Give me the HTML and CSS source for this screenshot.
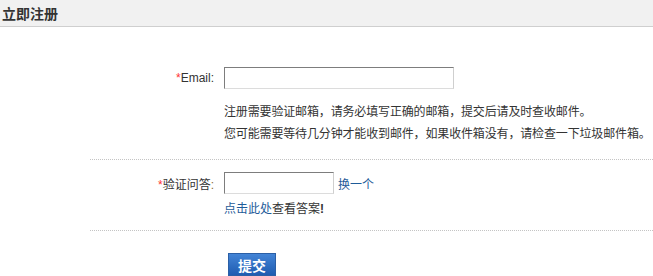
FILE: index.html
```html
<!DOCTYPE html>
<html lang="zh">
<head>
<meta charset="utf-8">
<link rel="stylesheet" href="styles.css">
</head>
<body>
<div class="header"><h2 class="title">立即注册</h2></div>
<form class="form">
  <div class="row row-email">
    <div class="line">
      <label class="label"><span class="req">*</span>Email:</label>
      <input class="input input-email" type="text">
    </div>
    <div class="hint">
      <p>注册需要验证邮箱，请务必填写正确的邮箱，提交后请及时查收邮件。</p>
      <p>您可能需要等待几分钟才能收到邮件，如果收件箱没有，请检查一下垃圾邮件箱。</p>
    </div>
  </div>
  <div class="row row-qa">
    <div class="line">
      <label class="label"><span class="req">*</span>验证问答<span class="colon">:</span></label>
      <input class="input input-qa" type="text">
      <a class="link change" href="#">换一个</a>
    </div>
    <div class="answer"><a class="link" href="#">点击此处</a>查看答案<b>!</b></div>
  </div>
  <div class="actions">
    <button class="btn" type="button">提交</button>
  </div>
</form>
</body>
</html>
```
FILE: styles.css
```css
html, body {
  margin: 0;
  padding: 0;
  background: #fff;
  overflow: hidden;
}
body {
  font-family: "Liberation Sans", "Noto Sans CJK SC", sans-serif;
  font-size: 12px;
  color: #333;
}
.header {
  height: 26px;
  background: #f1f1f1;
  border-bottom: 1px solid #cfcfcf;
  display: flex;
  align-items: center;
  padding-left: 2px;
}
.title {
  margin: 0;
  font-size: 14px;
  font-weight: bold;
  color: #333;
  font-family: "Noto Sans CJK SC", sans-serif;
  line-height: 16px;
}
.form {
  margin: 0 0 0 90px;
}
.row {
  border-bottom: 1px dotted #c4c4c4;
}
.row-email {
  padding: 40px 0 15px;
}
.row-qa {
  padding: 12px 0 10px;
}
.line {
  display: flex;
  align-items: center;
  height: 22px;
}
.label {
  width: 124px;
  text-align: right;
  padding-right: 10px;
  box-sizing: content-box;
  color: #333;
  white-space: nowrap;
}
.req {
  color: #f33;
}
.colon {
  color: #8a6d3b;
}
.input {
  box-sizing: border-box;
  height: 22px;
  border: 1px solid;
  border-color: #7d7d7d #cfcfcf #dcdcdc #7d7d7d;
  margin: 0;
  padding: 0 3px;
  font-size: 12px;
  outline: none;
}
.input-email {
  width: 230px;
}
.input-qa {
  width: 110px;
}
.link {
  color: #1f5c99;
  text-decoration: none;
}
.change {
  margin-left: 4px;
  font-family: "Noto Sans CJK SC", sans-serif;
}
.hint {
  margin: 11px 0 0 134px;
  font-family: "Noto Sans CJK SC", sans-serif;
  white-space: nowrap;
  letter-spacing: -0.15px;
}
.hint p {
  margin: 0;
  line-height: 22px;
}
.answer {
  margin: 3px 0 0 134px;
  line-height: 22px;
  font-family: "Noto Sans CJK SC", sans-serif;
}
.answer b {
  font-family: "Liberation Sans", sans-serif;
}
.actions {
  padding: 22px 0 0 138px;
}
.btn {
  width: 48px;
  height: 23px;
  padding: 0;
  border: 1px solid #2b5fa6;
  background: linear-gradient(#4384d6, #1f5cb1);
  color: #fff;
  font-weight: bold;
  font-size: 14px;
  font-family: "Noto Sans CJK SC", sans-serif;
  line-height: 20px;
  box-shadow: 0 1px 0 #e4e4e4;
}
```
